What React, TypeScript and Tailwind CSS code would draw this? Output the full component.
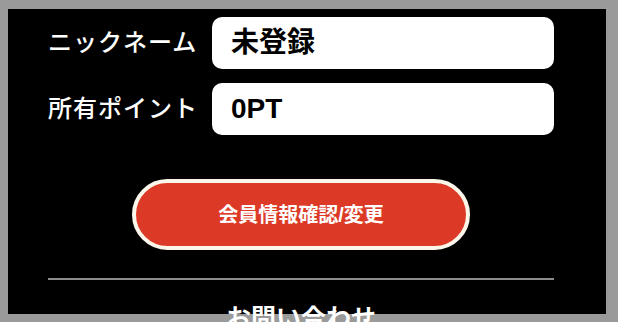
import React from "react";

const font = {
  fontFamily: '"Liberation Sans", "Noto Sans CJK JP", sans-serif',
};

type Row = { label: string; value: string };

const rows: Row[] = [
  { label: "ニックネーム", value: "未登録" },
  { label: "所有ポイント", value: "0PT" },
];

const App = () => {
  return (
    <div
      className="h-[322px] w-[618px] overflow-hidden bg-[#9a9a9a] pl-[8px] pt-[9px]"
      style={font}
    >
      <div className="h-[305px] w-[598px] bg-black pl-[40px] pr-[52px] pt-[8px]">
        {/* profile rows */}
        <div className="flex flex-col gap-[14px]">
          {rows.map((row) => (
            <div key={row.label} className="flex items-center">
              <span className="w-[164px] text-[24px] font-medium leading-none tracking-[1px] text-white">
                {row.label}
              </span>
              <div className="flex h-[52px] w-[342px] items-center rounded-[10px] bg-white pl-[19px]">
                <span className="text-[28px] font-bold leading-none text-black">
                  {row.value}
                </span>
              </div>
            </div>
          ))}
        </div>

        <button className="mx-auto mt-[44px] flex h-[71px] w-[338px] items-center justify-center rounded-full border-4 border-[#fbf6ea] bg-[#dc3a26] text-[20px] font-bold text-white">
          会員情報確認/変更
        </button>

        <div className="mt-[28px] h-[2px] w-full bg-[#8c8c8c]" />

        <h2 className="mt-[26px] text-center text-[25px] font-bold leading-none text-white">
          お問い合わせ
        </h2>
      </div>
    </div>
  );
};

export default App;
